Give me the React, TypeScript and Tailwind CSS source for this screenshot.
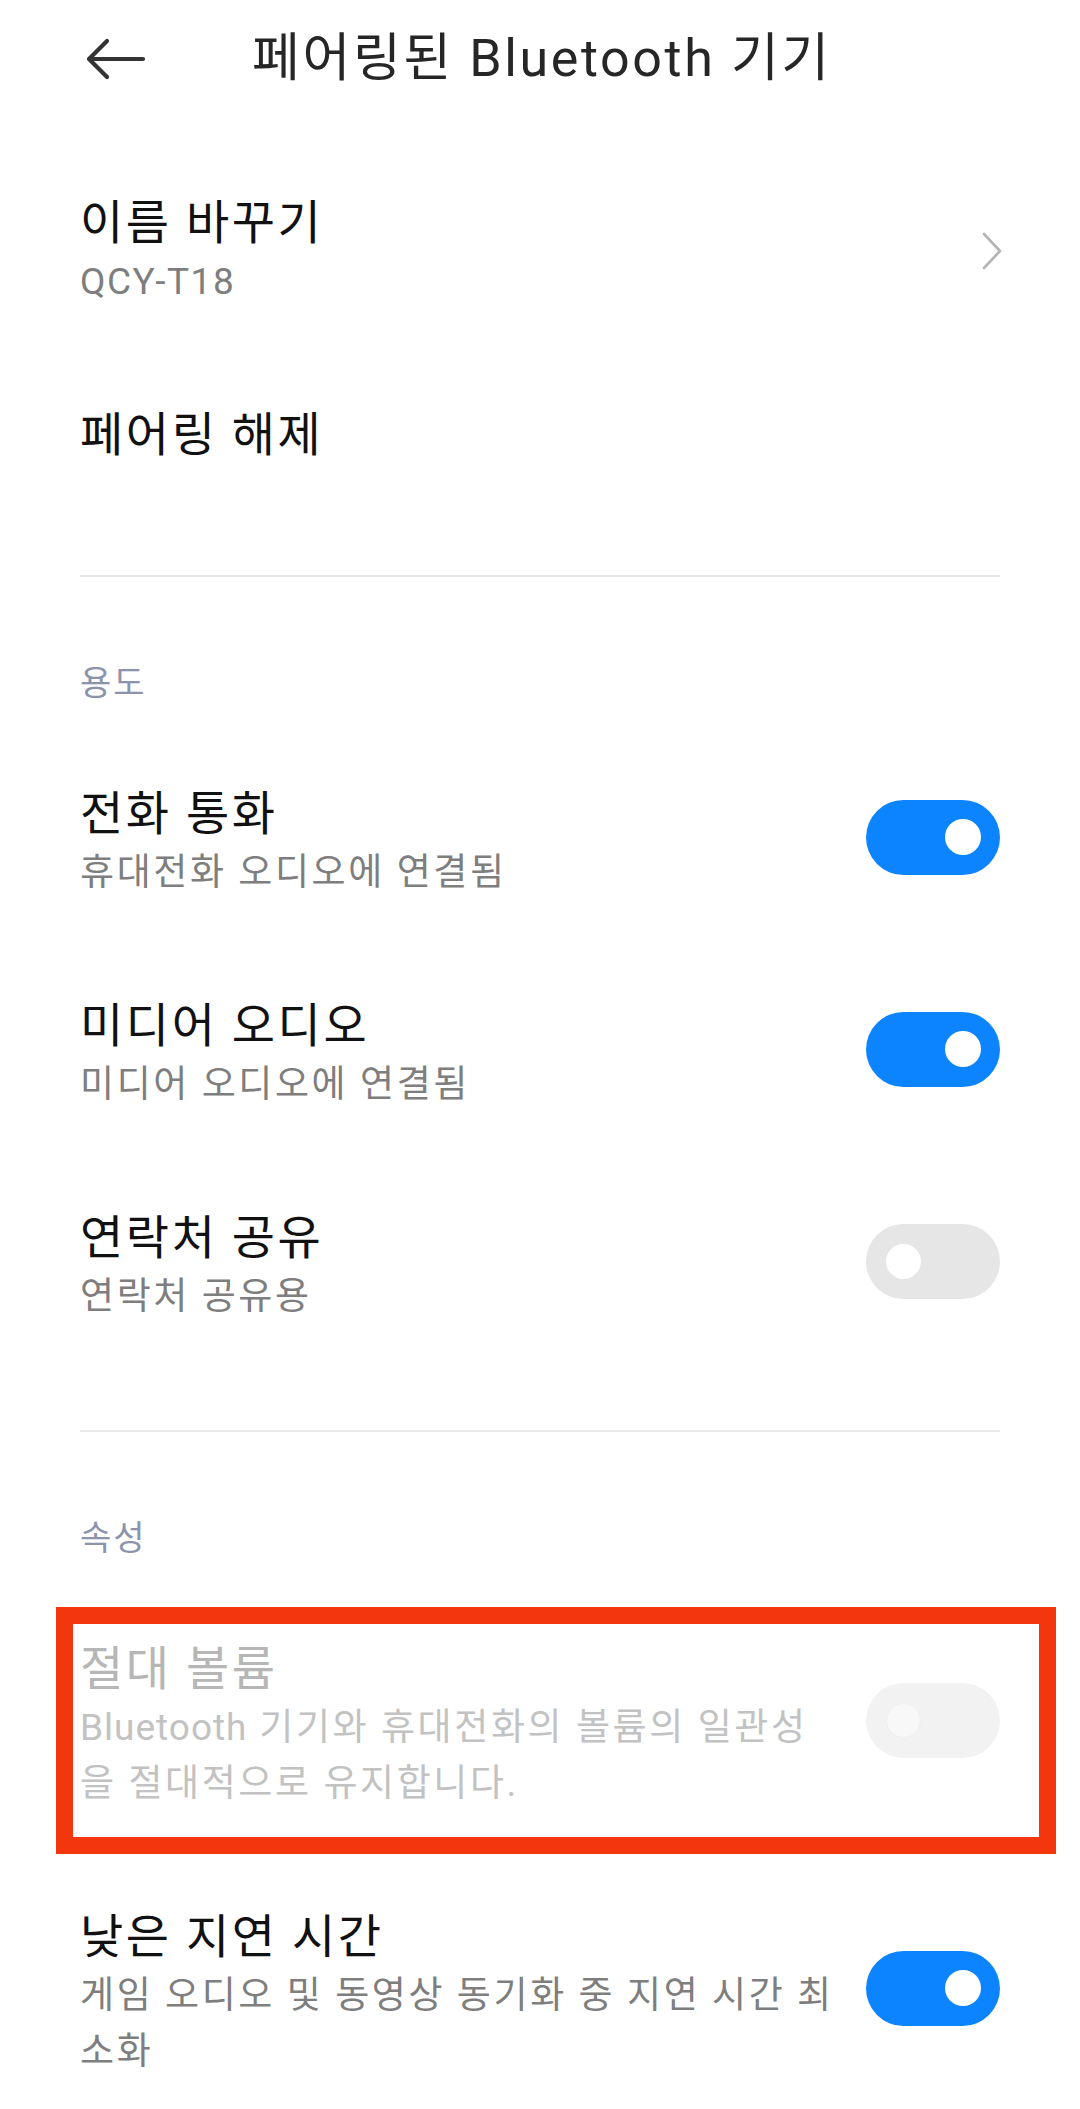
import type { ReactNode } from "react";

function Toggle({ on, disabled }: { on?: boolean; disabled?: boolean }) {
  if (disabled) {
    return (
      <div className="mb-[10px] flex h-[75px] w-[134px] shrink-0 items-center rounded-full bg-[#f2f2f2] pl-[20px]">
        <div className="h-[35px] w-[35px] rounded-full border border-[#efefef] bg-[#f8f8f8]" />
      </div>
    );
  }
  if (on) {
    return (
      <div className="mb-[10px] flex h-[75px] w-[134px] shrink-0 items-center justify-end rounded-full bg-[#0d84ff] pr-[19px]">
        <div className="h-[36px] w-[36px] rounded-full bg-white" />
      </div>
    );
  }
  return (
    <div className="mb-[10px] flex h-[75px] w-[134px] shrink-0 items-center rounded-full bg-[#e6e6e6] pl-[20px]">
      <div className="h-[35px] w-[35px] rounded-full bg-white" />
    </div>
  );
}

function Chevron() {
  return (
    <svg width="22" height="38" viewBox="0 0 22 38" className="-mr-[3px] shrink-0">
      <path d="M3 2 L19 19 L3 36" fill="none" stroke="#b4b4b4" strokeWidth="2.6" strokeLinecap="round" strokeLinejoin="round" />
    </svg>
  );
}

interface RowProps {
  title: string;
  sub?: ReactNode;
  right?: ReactNode;
  disabled?: boolean;
}

function Row({ title, sub, right, disabled }: RowProps) {
  return (
    <div className="flex items-center gap-[20px] py-[47px]">
      <div className="min-w-0 flex-1">
        <div className={`text-[47px] leading-[62px] tracking-[2.6px] ${disabled ? "text-[#b6b6b6]" : "text-[#111111]"}`}>
          {title}
        </div>
        {sub && (
          <div className={`whitespace-nowrap text-[37px] leading-[56px] tracking-[2.6px] ${disabled ? "text-[#c2c2c2]" : "text-[#7e7e7e]"}`}>
            {sub}
          </div>
        )}
      </div>
      {right}
    </div>
  );
}

function SectionLabel({ children }: { children: string }) {
  return <div className="pt-[82px] pb-[29px] text-[34px] leading-[48px] tracking-[2px] text-[#8c93ad]">{children}</div>;
}

export default function App() {
  return (
    <div className="h-[2109px] w-[1080px] overflow-hidden bg-white font-['Roboto','Noto_Sans_CJK_KR',sans-serif]">
      {/* top bar */}
      <div className="flex h-[118px] items-center pl-[86px]">
        <svg width="60" height="42" viewBox="0 0 60 42" className="shrink-0">
          <path d="M3 21 H57 M21 3 L3 21 L21 39" fill="none" stroke="#333333" strokeWidth="4.2" strokeLinecap="round" strokeLinejoin="round" />
        </svg>
        <div className="ml-[106px] whitespace-nowrap text-[52px] leading-[64px] tracking-[2.6px] text-[#262626]">
          페어링된 Bluetooth 기기
        </div>
      </div>

      <div className="px-[80px] pt-[27px]">
        <Row title="이름 바꾸기" sub={<span className="tracking-[1.5px]">QCY-T18</span>} right={<Chevron />} />
        <Row title="페어링 해제" />
        <div className="mt-[62px] h-[2px] bg-[#e8e8e8]" />

        <SectionLabel>용도</SectionLabel>
        <Row title="전화 통화" sub="휴대전화 오디오에 연결됨" right={<Toggle on />} />
        <Row title="미디어 오디오" sub="미디어 오디오에 연결됨" right={<Toggle on />} />
        <Row title="연락처 공유" sub="연락처 공유용" right={<Toggle />} />
        <div className="mt-[58px] h-[2px] bg-[#e8e8e8]" />

        <SectionLabel>속성</SectionLabel>
        <div className="relative">
          <Row
            title="절대 볼륨"
            sub={
              <>
                <span className="tracking-[1px]">Bluetooth</span> 기기와 휴대전화의 볼륨의 일관성
                <br />을 절대적으로 유지합니다.
              </>
            }
            right={<Toggle disabled />}
            disabled
          />
          {/* annotation frame */}
          <div className="pointer-events-none absolute -left-[24px] -right-[56px] top-[16px] bottom-[5px] border-[17px] border-[#f4360f]" />
        </div>
        <Row
          title="낮은 지연 시간"
          sub={
            <>
              게임 오디오 및 동영상 동기화 중 지연 시간 최
              <br />
              소화
            </>
          }
          right={<Toggle on />}
        />
      </div>
    </div>
  );
}
